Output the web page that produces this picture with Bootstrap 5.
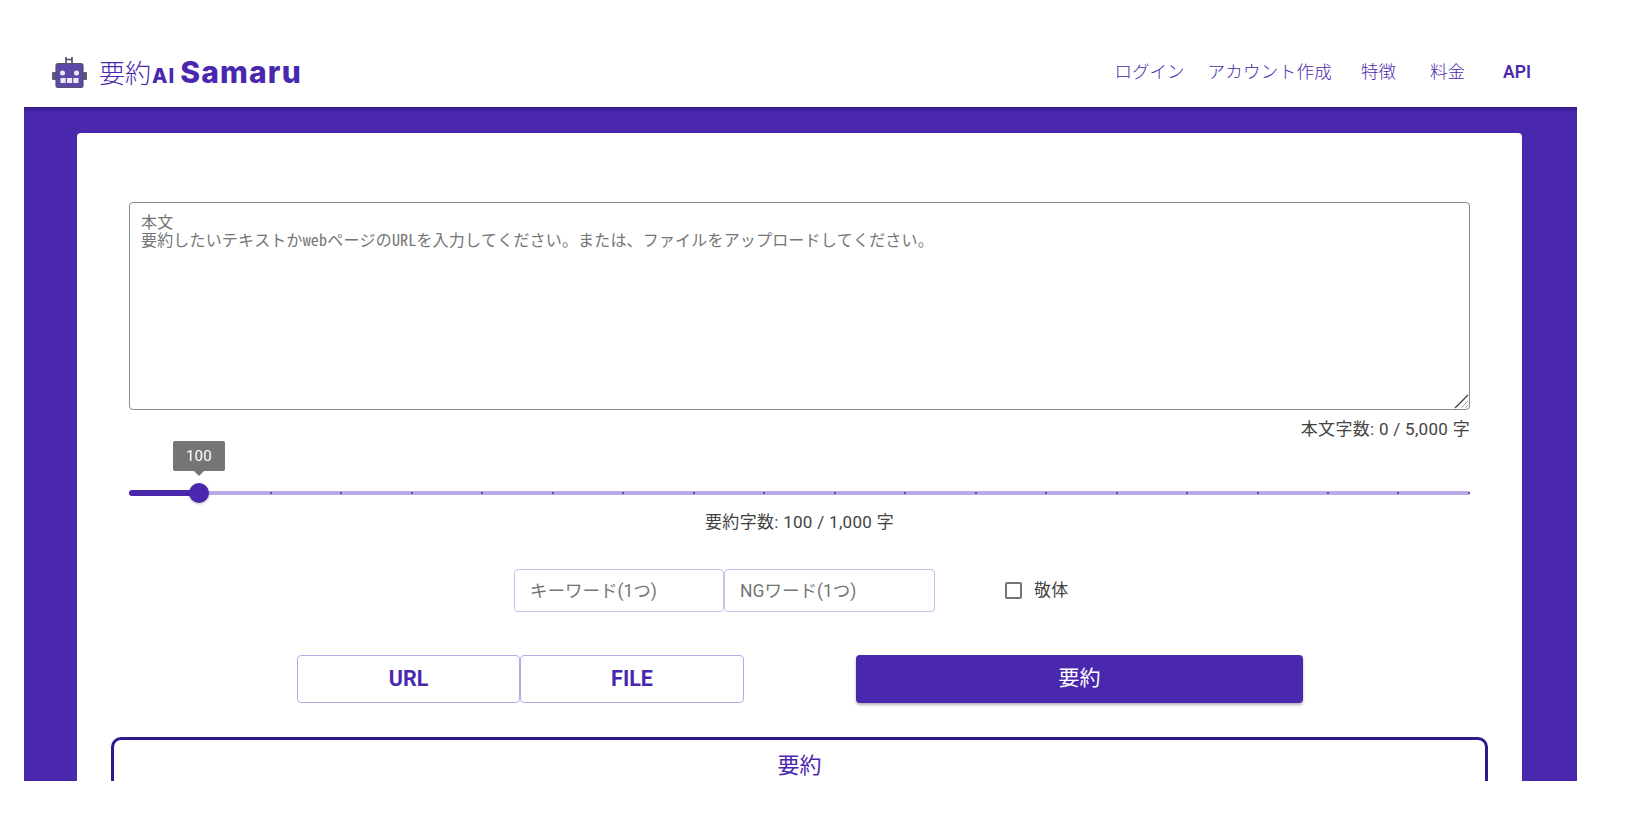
<!DOCTYPE html>
<html lang="ja">
<head>
<meta charset="utf-8">
<title>要約AI Samaru</title>
<link href="https://cdn.jsdelivr.net/npm/bootstrap@5.3.0/dist/css/bootstrap.min.css" rel="stylesheet">
<style>
:root { --brand:#4a28ae; --brand-soft:#b9aae6; --jp:"Roboto","Noto Sans CJK JP",sans-serif; }
html, body { height:100%; overflow:hidden; background:#fff; }
body { font-family:var(--jp); color:#424242; font-size:17px; letter-spacing:.3px; }
.site-top { height:107px; margin:0 49px 0 24px; padding:36px 46px 0 28px; }
.logo-word { color:var(--brand); text-decoration:none; line-height:1; margin-left:12px; }
.logo-jp { font-size:26px; font-weight:300; letter-spacing:0; }
.logo-ai { font-family:"Inter",sans-serif; font-weight:800; font-size:20px; margin-left:1px; letter-spacing:1px; }
.logo-en { font-family:"Inter",sans-serif; font-weight:800; font-size:30px; margin-left:5px; letter-spacing:1.2px; }
.top-links { padding-top:3px; }
.top-links .nav-link { color:var(--brand); padding:0; font-size:17.500px; line-height:1; font-weight:300; letter-spacing:0; }
.top-links .nav-item:nth-child(2) { margin-left:23px; }
.top-links .nav-item:nth-child(2) .nav-link { letter-spacing:.3px; }
.top-links .nav-item:nth-child(3) { margin-left:29px; }
.top-links .nav-item:nth-child(4) { margin-left:34px; }
.top-links .nav-item:nth-child(5) { margin-left:38px; }
.top-links .nav-item:nth-child(5) .nav-link { font-weight:600; }
.purple-band { height:674px; margin:0 49px 0 24px; padding:26px 55px 0 53px; background:var(--brand); overflow:hidden; box-shadow:inset 0 5px 5px -3px rgba(30,15,90,.55); }
.sheet { height:700px; background:#fff; border-radius:4px; padding:69px 52px 0; }
.body-field { position:relative; }
.body-input.form-control { height:208px; border:1px solid #8a8a8a; border-radius:4px; padding:10px 11px 9px; font-family:"Noto Sans Mono CJK JP","Noto Sans CJK JP",monospace; font-size:16px; line-height:17.500px; letter-spacing:.17px; resize:none; }
.body-input::placeholder { color:#757575; opacity:1; }
.drag-mark { position:absolute; right:1px; bottom:1px; pointer-events:none; }
.count-line { height:24px; margin-top:7px; line-height:24px; }
.slide-wrap { position:relative; height:20px; margin-top:42px; }
.slide-rail { position:absolute; left:0; right:0; top:8px; height:4px; background:var(--brand-soft); border-radius:2px; }
.slide-dot { width:2px; height:2px; margin-top:1px; border-radius:50%; background:var(--brand); }
.slide-fill { position:absolute; left:0; top:7px; width:70px; height:6px; border-radius:3px; background:var(--brand); }
.slide-knob { position:absolute; left:60px; top:0; width:20px; height:20px; border-radius:50%; background:var(--brand); box-shadow:0 1px 3px rgba(0,0,0,.25); }
.slide-tip { position:absolute; left:44px; top:-42px; width:52px; height:30px; background:#757575; color:#fff; border-radius:2px; font-size:15px; line-height:30px; text-align:center; }
.slide-tip::after { content:""; position:absolute; left:21px; top:100%; border:5px solid transparent; border-top-color:#757575; border-bottom:0; }
.goal-line { margin-top:7px; height:24px; line-height:24px; }
.opts-line { margin-top:35px; height:43px; padding-left:385px; }
.word-input.form-control { width:211px; height:43px; flex:none; border:1px solid #c9c1ea; border-radius:4px; padding:0 15px; font-size:17.500px; letter-spacing:0; }
.word-input.form-control:first-child { width:210px; }
.word-input.form-control::placeholder { color:#757575; opacity:1; }
.polite { margin:0 0 0 70px; padding:0; min-height:0; }
.polite .form-check-input { float:none; width:17px; height:17px; margin:0 12px 0 0; border:2px solid #757575; border-radius:2px; }
.polite .form-check-label { font-size:17px; }
.acts-line { margin-top:43px; height:48px; padding-left:168px; }
.act-side.btn { width:224px; height:48px; border:1px solid var(--brand-soft); border-radius:4px; color:var(--brand); background:#fff; font-weight:700; font-size:21.500px; padding:1px 0 0; letter-spacing:0; }
.act-side.btn:first-child { width:223px; }
.act-main.btn { width:447px; height:48px; margin-left:112px; border:0; border-radius:4px; background:var(--brand); color:#fff; font-size:21px; padding:0; letter-spacing:0; box-shadow:0 2px 3px rgba(0,0,0,.3); }
.result-box { margin:34px -18px 0; height:120px; border:3px solid #2d1a8c; border-radius:10px; padding-top:12px; color:var(--brand); font-size:22px; line-height:28px; letter-spacing:0; text-align:center; }
</style>
</head>
<body>
<header class="site-top d-flex align-items-center justify-content-between">
  <a href="#" class="d-flex align-items-center text-decoration-none" aria-label="要約AI Samaru">
    <svg width="35" height="32" viewBox="0 0 35 32" aria-hidden="true">
      <path d="M14 1v6M20 1v6M14 3.500h6" stroke="#4b4b63" stroke-width="1.600" fill="none"/>
      <rect x="0" y="16" width="5" height="8" rx="1" fill="#5e5a78"/>
      <rect x="30" y="16" width="5" height="8" rx="1" fill="#5e5a78"/>
      <rect x="4" y="7.500" width="27" height="24" rx="2" fill="#5d48a8" stroke="#55526a" stroke-width="1.200"/>
      <circle cx="10.500" cy="17" r="2.500" fill="#eceaf6"/>
      <circle cx="24.500" cy="17" r="2.500" fill="#eceaf6"/>
      <rect x="8.500" y="22" width="5.200" height="5" fill="#eceaf6"/>
      <rect x="14.900" y="22" width="5.200" height="5" fill="#eceaf6"/>
      <rect x="21.300" y="22" width="5.200" height="5" fill="#eceaf6"/>
    </svg>
    <span class="logo-word d-flex align-items-baseline"><span class="logo-jp">要約</span><span class="logo-ai">AI</span><span class="logo-en">Samaru</span></span>
  </a>
  <ul class="nav top-links">
    <li class="nav-item"><a class="nav-link" href="#">ログイン</a></li>
    <li class="nav-item"><a class="nav-link" href="#">アカウント作成</a></li>
    <li class="nav-item"><a class="nav-link" href="#">特徴</a></li>
    <li class="nav-item"><a class="nav-link" href="#">料金</a></li>
    <li class="nav-item"><a class="nav-link" href="#">API</a></li>
  </ul>
</header>
<main class="purple-band">
  <section class="sheet">
    <div class="body-field">
      <textarea class="form-control body-input" placeholder="本文&#10;要約したいテキストかwebページのURLを入力してください。または、ファイルをアップロードしてください。"></textarea>
      <svg class="drag-mark" width="15" height="15" viewBox="0 0 15 15" aria-hidden="true">
        <path d="M1 14 14 1" stroke="#4a4a4a" stroke-width="1.400"/>
        <path d="M7 14 14 7M11 14 14 11" stroke="#a8a8a8" stroke-width="1"/>
      </svg>
    </div>
    <div class="count-line text-end">本文字数: 0 / 5,000 字</div>
    <div class="slide-wrap">
      <div class="slide-rail d-flex justify-content-between">
        <i class="slide-dot"></i><i class="slide-dot"></i><i class="slide-dot"></i><i class="slide-dot"></i><i class="slide-dot"></i><i class="slide-dot"></i><i class="slide-dot"></i><i class="slide-dot"></i><i class="slide-dot"></i><i class="slide-dot"></i><i class="slide-dot"></i><i class="slide-dot"></i><i class="slide-dot"></i><i class="slide-dot"></i><i class="slide-dot"></i><i class="slide-dot"></i><i class="slide-dot"></i><i class="slide-dot"></i><i class="slide-dot"></i><i class="slide-dot"></i>
      </div>
      <div class="slide-fill"></div>
      <div class="slide-knob"></div>
      <div class="slide-tip">100</div>
    </div>
    <div class="goal-line text-center">要約字数: 100 / 1,000 字</div>
    <div class="opts-line d-flex align-items-center">
      <input type="text" class="form-control word-input" placeholder="キーワード(1つ)">
      <input type="text" class="form-control word-input" placeholder="NGワード(1つ)">
      <div class="form-check polite d-flex align-items-center">
        <input class="form-check-input" type="checkbox" id="polite">
        <label class="form-check-label" for="polite">敬体</label>
      </div>
    </div>
    <div class="acts-line d-flex">
      <button type="button" class="btn act-side">URL</button>
      <button type="button" class="btn act-side">FILE</button>
      <button type="button" class="btn act-main">要約</button>
    </div>
    <div class="result-box">要約</div>
  </section>
</main>
<script src="https://cdn.jsdelivr.net/npm/bootstrap@5.3.0/dist/js/bootstrap.bundle.min.js"></script>
</body>
</html>
